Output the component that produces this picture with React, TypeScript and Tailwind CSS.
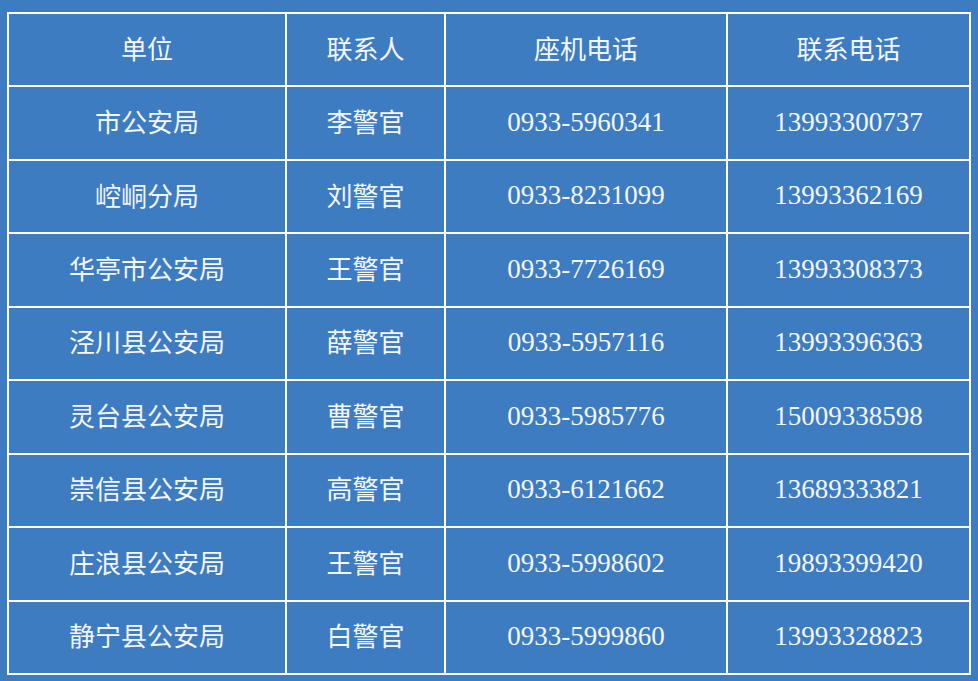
const rows = [
  ["市公安局", "李警官", "0933-5960341", "13993300737"],
  ["崆峒分局", "刘警官", "0933-8231099", "13993362169"],
  ["华亭市公安局", "王警官", "0933-7726169", "13993308373"],
  ["泾川县公安局", "薛警官", "0933-5957116", "13993396363"],
  ["灵台县公安局", "曹警官", "0933-5985776", "15009338598"],
  ["崇信县公安局", "高警官", "0933-6121662", "13689333821"],
  ["庄浪县公安局", "王警官", "0933-5998602", "19893399420"],
  ["静宁县公安局", "白警官", "0933-5999860", "13993328823"],
];

const cjk = "font-['Noto_Sans_CJK_SC','Noto_Sans',sans-serif] text-[26px] pb-[5px]";
const num = "font-['Liberation_Serif','Times_New_Roman',serif] text-[27px] pb-[2px]";

export default function App() {
  return (
    <main className="h-[681px] w-[978px] bg-[#3d7cc1] pl-[7px] pt-[12px] text-[#f4f7fb]">
      <div className="grid h-[663px] w-[964px] grid-cols-[276px_157px_280px_241px] grid-rows-9 gap-[2px] bg-white p-[2px]">
        {["单位", "联系人", "座机电话", "联系电话"].map((h) => (
          <div key={h} className={`flex items-center justify-center bg-[#3d7cc1] ${cjk}`}>
            {h}
          </div>
        ))}
        {rows.map((r) =>
          r.map((c, i) => (
            <div
              key={r[0] + i}
              className={`flex items-center justify-center bg-[#3d7cc1] ${i < 2 ? cjk : num}`}
            >
              {c}
            </div>
          ))
        )}
      </div>
    </main>
  );
}
